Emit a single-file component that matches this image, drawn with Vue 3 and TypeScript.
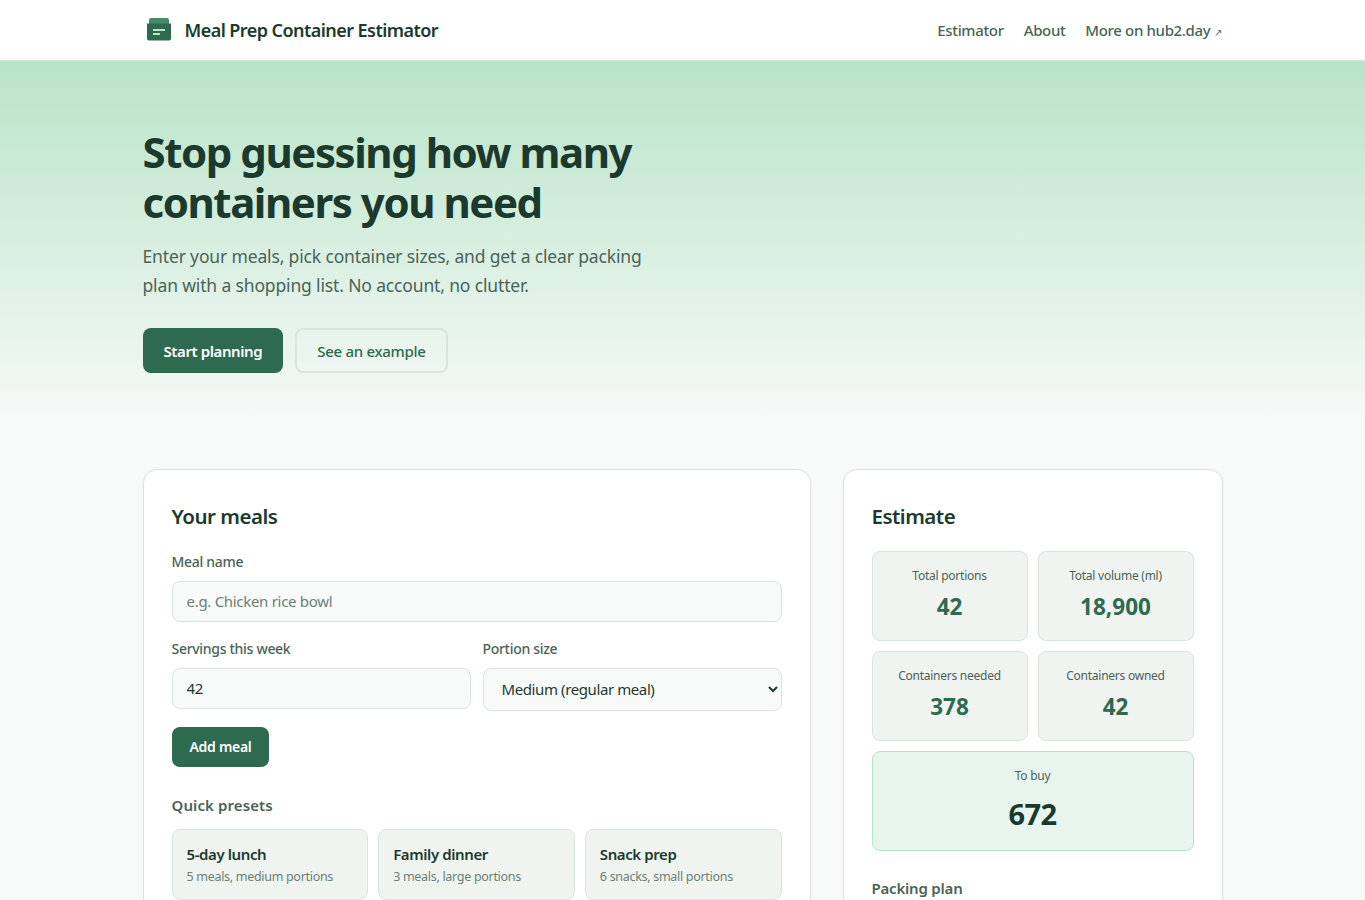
<script setup lang="ts">
const stats = [
  { label: "Total portions", value: "42" },
  { label: "Total volume (ml)", value: "18,900" },
  { label: "Containers needed", value: "378" },
  { label: "Containers owned", value: "42" },
];

const presets = [
  { name: "5-day lunch", note: "5 meals, medium portions" },
  { name: "Family dinner", note: "3 meals, large portions" },
  { name: "Snack prep", note: "6 snacks, small portions" },
];
</script>

<template>
  <div class="page">
    <header class="topbar">
      <div class="wrap topbar-in">
        <a class="brand">
          <svg class="logo" viewBox="0 0 24 24" width="24" height="24">
            <path d="M4 1h16a2 2 0 0 1 2 2v4H2V3a2 2 0 0 1 2-2z" fill="#4a8a6c" />
            <path d="M0 6.500h24v15a2 2 0 0 1-2 2H2a2 2 0 0 1-2-2z" fill="#2d6a4f" />
            <rect x="6" y="12" width="12" height="2" fill="#b8e4c8" />
            <rect x="6" y="16" width="7" height="2" fill="#b8e4c8" />
          </svg>
          Meal Prep Container Estimator
        </a>
        <nav class="nav">
          <a>Estimator</a>
          <a>About</a>
          <a>More on hub2.day <span class="ext">↗</span></a>
        </nav>
      </div>
    </header>

    <section class="hero">
      <div class="wrap">
        <h1>Stop guessing how many<br />containers you need</h1>
        <p class="lead">Enter your meals, pick container sizes, and get a clear packing plan with a shopping list. No account, no clutter.</p>
        <div class="hero-actions">
          <button class="btn primary">Start planning</button>
          <button class="btn ghost">See an example</button>
        </div>
      </div>
    </section>

    <main class="wrap columns">
      <section class="card">
        <h2>Your meals</h2>
        <label class="field">
          <span class="lbl">Meal name</span>
          <input class="ctl" type="text" placeholder="e.g. Chicken rice bowl" />
        </label>
        <div class="two">
          <label class="field">
            <span class="lbl">Servings this week</span>
            <input class="ctl" type="number" value="42" />
          </label>
          <label class="field">
            <span class="lbl">Portion size</span>
            <select class="ctl sel">
              <option>Medium (regular meal)</option>
            </select>
          </label>
        </div>
        <button class="btn primary small">Add meal</button>
        <h3 class="quick">Quick presets</h3>
        <div class="presets">
          <button v-for="p in presets" :key="p.name" class="preset">
            <strong>{{ p.name }}</strong>
            <span>{{ p.note }}</span>
          </button>
        </div>
      </section>

      <aside class="card">
        <h2>Estimate</h2>
        <div class="stats">
          <div v-for="s in stats" :key="s.label" class="stat">
            <div class="stat-label">{{ s.label }}</div>
            <div class="stat-value">{{ s.value }}</div>
          </div>
          <div class="stat buy">
            <div class="stat-label">To buy</div>
            <div class="stat-value">672</div>
          </div>
        </div>
        <h3 class="plan">Packing plan</h3>
      </aside>
    </main>
  </div>
</template>

<style>
html,
body {
  margin: 0;
  background: #f8faf9;
}
</style>

<style scoped>
.page {
  height: 900px;
  overflow: hidden;
  font-family: "Noto Sans", "Open Sans", sans-serif;
  color: #1b3a2d;
  background: #f8faf9;
}
.wrap {
  width: 1080px;
  margin: 0 auto;
}
.topbar {
  height: 60px;
  background: #fff;
  border-bottom: 1px solid #d8e4dc;
}
.topbar-in {
  height: 60px;
  display: flex;
  align-items: center;
  justify-content: space-between;
}
.brand {
  display: flex;
  align-items: center;
  gap: 14px;
  padding-left: 4px;
  font-size: 18px;
  font-weight: 600;
  letter-spacing: -0.55px;
}
.logo {
  display: block;
  margin-top: -2px;
}
.nav {
  display: flex;
  gap: 20px;
  padding-right: 1px;
  font-size: 15px;
  font-weight: 500;
  color: #4a6358;
  letter-spacing: -0.35px;
}
.ext {
  font-size: 10px;
}
.hero {
  height: 368px;
  padding-top: 66px;
  box-sizing: border-box;
  background: linear-gradient(180deg, #b8e4c8 0%, #f8faf9 100%);
}
h1 {
  margin: 0;
  font-size: 42px;
  line-height: 50px;
  font-weight: 700;
  letter-spacing: -1.45px;
}
.lead {
  margin: 15px 0 0;
  width: 520px;
  font-size: 17.5px;
  line-height: 29px;
  color: #4a6358;
  letter-spacing: -0.15px;
}
.hero-actions {
  display: flex;
  gap: 12px;
  margin-top: 28px;
}
.btn {
  font: inherit;
  font-size: 15px;
  font-weight: 600;
  height: 45px;
  padding: 0 21px;
  border-radius: 8px;
  border: 0;
  letter-spacing: -0.4px;
}
.primary {
  background: #2d6a4f;
  color: #fff;
}
.ghost {
  padding: 0 20px;
  background: transparent;
  border: 2px solid #d8e4dc;
  color: #2d6a4f;
  font-weight: 500;
  letter-spacing: -0.3px;
}
.small {
  display: block;
  height: 40px;
  padding: 0 18px;
  font-size: 14px;
  letter-spacing: -0.3px;
}
.columns {
  display: grid;
  grid-template-columns: 668px 380px;
  gap: 32px;
  margin-top: 40px;
}
.card {
  background: #fff;
  border: 1px solid #d8e4dc;
  border-radius: 14px;
  padding: 28px;
  box-shadow: 0 1px 3px rgba(27, 58, 45, 0.05);
}
h2 {
  margin: 0 0 17px;
  font-size: 20.5px;
  line-height: 36px;
  font-weight: 600;
  letter-spacing: -0.5px;
}
.field {
  display: block;
  margin-bottom: 16px;
}
.lbl {
  display: block;
  margin-bottom: 8px;
  font-size: 14px;
  line-height: 21.5px;
  font-weight: 500;
  color: #4a6358;
  letter-spacing: -0.3px;
}
.ctl {
  display: block;
  width: 100%;
  box-sizing: border-box;
  height: 41.5px;
  padding: 0 14px;
  font: inherit;
  font-size: 15px;
  color: #1b3a2d;
  background: #f8faf9;
  border: 1px solid #d8e4dc;
  border-radius: 8px;
  letter-spacing: -0.3px;
}
.ctl::placeholder {
  color: #6b7f75;
}
.sel {
  height: 43px;
  letter-spacing: -0.4px;
}
.two {
  display: grid;
  grid-template-columns: 1fr 1fr;
  gap: 12px;
}
h3 {
  margin: 26px 0 12px;
  font-size: 15px;
  line-height: 24px;
  font-weight: 600;
  color: #4a6358;
  letter-spacing: -0.2px;
}
.quick {
  letter-spacing: 0.1px;
}
.presets {
  display: grid;
  grid-template-columns: repeat(3, 1fr);
  gap: 10px;
}
.preset {
  display: block;
  text-align: left;
  font: inherit;
  height: 71px;
  padding: 0 14px;
  background: #f0f4f1;
  border: 1px solid #d8e4dc;
  border-radius: 8px;
  color: #1b3a2d;
}
.preset strong {
  display: block;
  font-size: 15px;
  font-weight: 600;
  letter-spacing: -0.4px;
}
.preset span {
  display: block;
  margin-top: 4px;
  font-size: 12.5px;
  color: #6b7f75;
  letter-spacing: -0.3px;
}
.stats {
  display: grid;
  grid-template-columns: 1fr 1fr;
  gap: 10px;
}
.stat {
  height: 90px;
  box-sizing: border-box;
  padding-top: 16px;
  text-align: center;
  background: #f0f4f1;
  border: 1px solid #d8e4dc;
  border-radius: 8px;
}
.stat-label {
  font-size: 12px;
  line-height: 16px;
  color: #4a6358;
  letter-spacing: -0.25px;
}
.stat-value {
  margin-top: 7px;
  font-size: 22.5px;
  line-height: 32px;
  font-weight: 700;
  color: #2d6a4f;
}
.buy {
  grid-column: span 2;
  height: 100px;
  background: #e8f5ee;
  border-color: #b8e4c8;
}
.buy .stat-value {
  margin-top: 10px;
  font-size: 29px;
  line-height: 40px;
  letter-spacing: -0.6px;
  color: #1b3a2d;
}
.plan {
  margin-top: 25px;
}
</style>
